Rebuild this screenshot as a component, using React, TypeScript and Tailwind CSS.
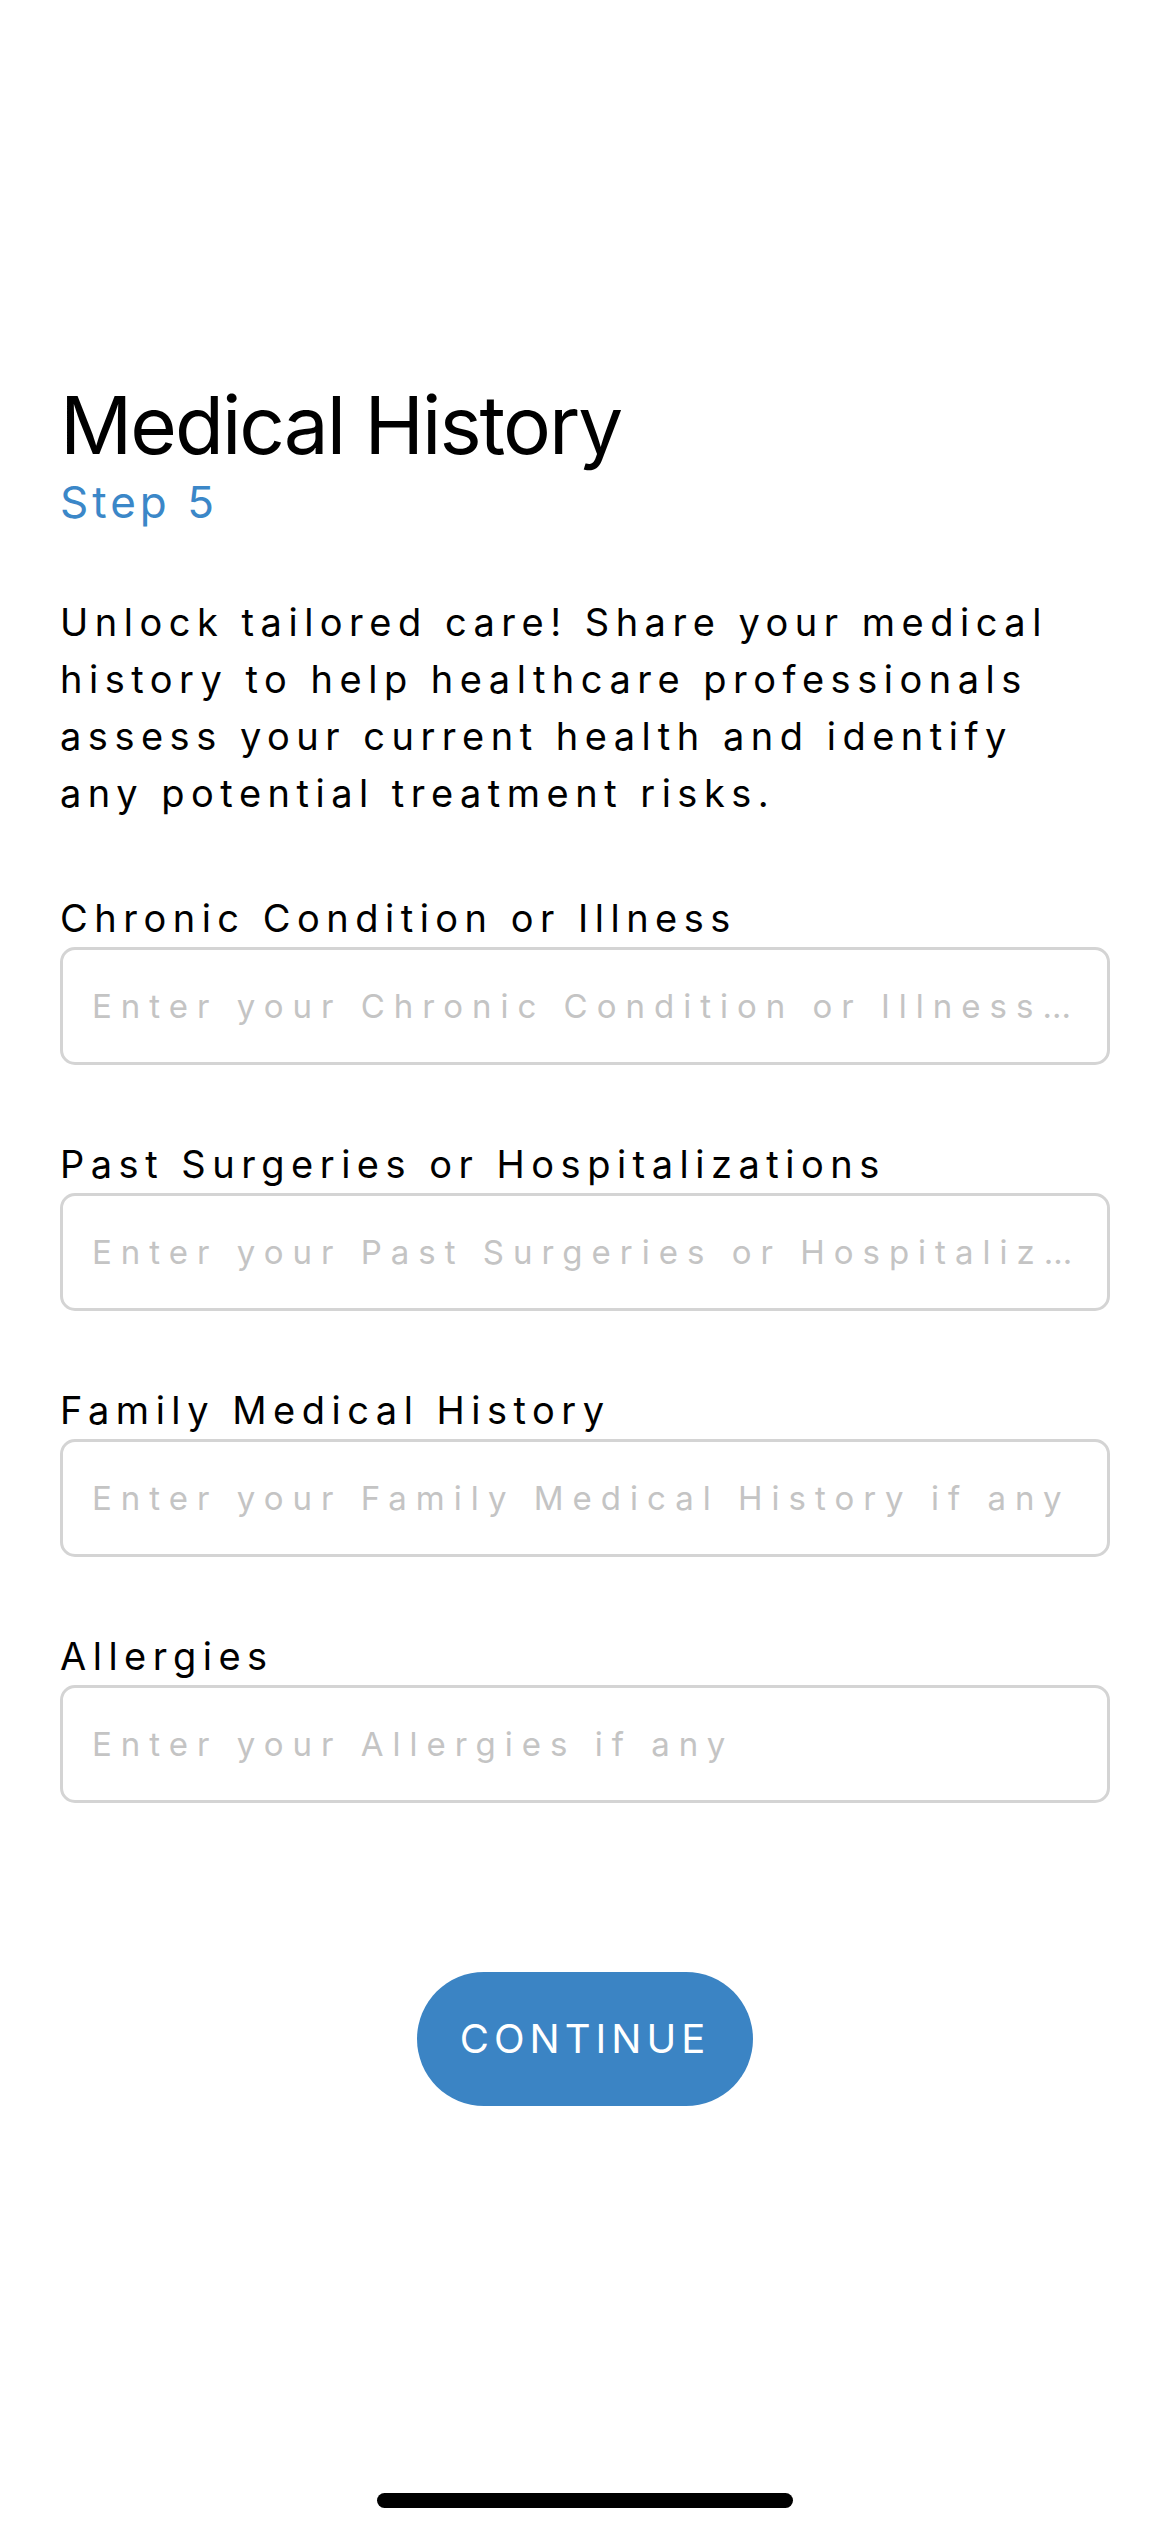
import { useState } from "react";

const FIELDS = [
  {
    key: "chronic",
    label: "Chronic Condition or Illness",
    placeholder: "Enter your Chronic Condition or Illness if any",
  },
  {
    key: "surgeries",
    label: "Past Surgeries or Hospitalizations",
    placeholder: "Enter your Past Surgeries or Hospitalizations if any",
  },
  {
    key: "family",
    label: "Family Medical History",
    placeholder: "Enter your Family Medical History if any",
  },
  {
    key: "allergies",
    label: "Allergies",
    placeholder: "Enter your Allergies if any",
  },
];

export default function App() {
  const [values, setValues] = useState<Record<string, string>>({});

  return (
    <main className="min-h-[2532px] w-full bg-white text-black flex flex-col font-['Inter',sans-serif]">
      <section className="px-[60px] pt-[377px] flex flex-col">
        {/* header */}
        <h1 className="text-[80px] leading-[96px] tracking-[-2px] font-normal">Medical History</h1>
        <p className="text-[44px] leading-[58px] tracking-[4px] text-[#3b87c8]">Step 5</p>

        <p className="mt-[63px] text-[38px] leading-[57px] tracking-[6.5px]">
          Unlock tailored care! Share your medical history to help healthcare professionals assess
          your current health and identify any potential treatment risks.
        </p>

        {/* form fields */}
        <div className="mt-[73px] flex flex-col gap-[76px]">
          {FIELDS.map((f) => (
            <label key={f.key} className="flex flex-col">
              <span className="text-[38px] leading-[46px] tracking-[6.5px] mb-[6px]">{f.label}</span>
              <input
                type="text"
                value={values[f.key] ?? ""}
                onChange={(e) => setValues({ ...values, [f.key]: e.target.value })}
                placeholder={f.placeholder}
                className="h-[118px] w-full rounded-[15px] border-[3px] border-[#d4d4d4] bg-white px-[29px] text-[33px] tracking-[9px] text-black outline-none text-ellipsis placeholder:text-[#c4c4c4] placeholder:text-ellipsis"
              />
            </label>
          ))}
        </div>

        <div className="mt-[169px] flex justify-center">
          <button className="w-[336px] h-[134px] rounded-full bg-[#3b84c4] text-white text-[40px] tracking-[5px] flex items-center justify-center">
            CONTINUE
          </button>
        </div>
      </section>

      {/* home indicator */}
      <div className="mt-auto pb-[24px] flex justify-center">
        <div className="w-[416px] h-[15px] rounded-full bg-black" />
      </div>
    </main>
  );
}
